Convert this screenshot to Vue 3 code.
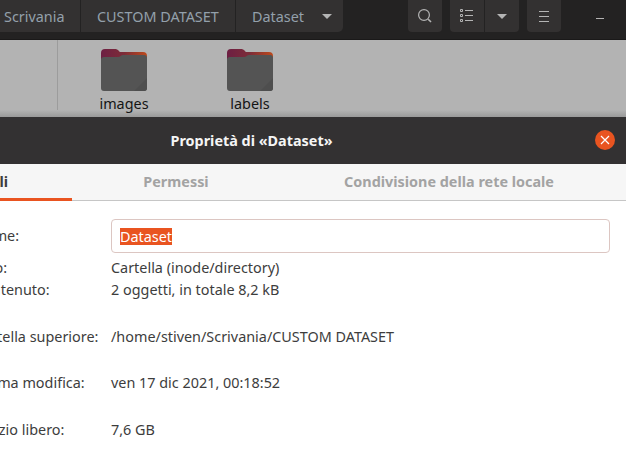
<script setup>
const pathParts = [
  { label: "Scrivania", cls: "crumb-first" },
  { label: "CUSTOM DATASET", cls: "crumb-mid" },
]
const folders = ["images", "labels"]
const rows = [
  { label: "Tipo:", value: "Cartella (inode/directory)", cls: "row-first" },
  { label: "Contenuto:", value: "2 oggetti, in totale 8,2 kB", cls: "" },
  { label: "Cartella superiore:", value: "/home/stiven/Scrivania/CUSTOM DATASET", cls: "row-spaced" },
  { label: "Ultima modifica:", value: "ven 17 dic 2021, 00:18:52", cls: "row-spaced" },
  { label: "Spazio libero:", value: "7,6 GB", cls: "row-spaced" },
]
</script>

<template>
  <div class="screen">
    <header class="toolbar">
      <nav class="pathbar">
        <span v-for="part in pathParts" :key="part.label" class="crumb" :class="part.cls">{{ part.label }}</span>
        <span class="crumb crumb-last">Dataset<i class="caret"></i></span>
      </nav>
      <div class="tools">
        <button class="tool">
          <svg width="16" height="16" viewBox="0 0 16 16" fill="none" stroke="#b4b4b4" stroke-width="1.2">
            <circle cx="7" cy="7" r="5.4" />
            <path d="M11.2 11.2 14 14" stroke-width="1.6" />
          </svg>
        </button>
        <div class="tool-group">
          <button class="tool">
            <svg width="14" height="14" viewBox="0 0 14 14" fill="none" stroke="#b4b4b4">
              <path d="M.5.5h2v2h-2zM.5 5.5h2v2h-2zM.5 10.5h2v2h-2zM5 1.5h8M5 6.5h8M5 11.5h8" />
            </svg>
          </button>
          <button class="tool"><i class="caret"></i></button>
        </div>
        <button class="tool">
          <svg width="12" height="12" viewBox="0 0 12 12" fill="none" stroke="#b4b4b4">
            <path d="M1 1.500h10M1 6.500h10M1 11.500h10" />
          </svg>
        </button>
        <span class="minimize"></span>
      </div>
    </header>

    <section class="files">
      <aside class="sidebar"></aside>
      <div class="folder" v-for="name in folders" :key="name">
        <svg width="48" height="44" viewBox="0 0 48 44">
          <defs>
            <linearGradient :id="'back-' + name" x1="0" y1="0" x2="1" y2="0">
              <stop offset="0" stop-color="#6d1f43" />
              <stop offset="0.5" stop-color="#7d2c38" />
              <stop offset="1" stop-color="#bd4a1c" />
            </linearGradient>
          </defs>
          <path d="M1 5a4 4 0 0 1 4-4h10c3 0 4 2.500 5 3h23a4 4 0 0 1 4 4v12H1z" :fill="'url(#back-' + name + ')'" />
          <path d="M1 12a3 3 0 0 1 3-3h14c2.500 0 3-2 5-2h21a3 3 0 0 1 3 3v30a3 3 0 0 1-3 3H4a3 3 0 0 1-3-3z" fill="#545454" />
          <path d="M47 30v10a3 3 0 0 1-3 3H34z" fill="#4e4e4e" />
        </svg>
        <span class="folder-name">{{ name }}</span>
      </div>
    </section>

    <section class="dialog">
      <div class="titlebar">
        <h1 class="title">Proprietà di «Dataset»</h1>
        <button class="close">
          <svg width="10" height="10" viewBox="0 0 10 10" stroke="#fff" stroke-width="1.2">
            <path d="M1 1l8 8M9 1l-8 8" />
          </svg>
        </button>
      </div>
      <div class="tabs">
        <span class="tab tab-active">Dettagli</span>
        <span class="tab tab-perm">Permessi</span>
        <span class="tab tab-share">Condivisione della rete locale</span>
      </div>
      <div class="details">
        <span class="label name-label">Nome:</span>
        <div class="entry"><span class="selected">Dataset</span></div>
        <template v-for="row in rows" :key="row.label">
          <span class="label" :class="row.cls">{{ row.label }}</span>
          <span class="value" :class="row.cls">{{ row.value }}</span>
        </template>
      </div>
    </section>
  </div>
</template>

<style>
html, body {
  margin: 0;
  background: #fff;
}
</style>

<style scoped>
.screen {
  width: 626px;
  height: 464px;
  overflow: hidden;
  display: flex;
  flex-direction: column;
  font-family: "Noto Sans", "Open Sans", sans-serif;
  font-size: 14.4px;
  color: #3d3d3d;
}

/* Top bar of the file manager, dimmed by the dialog */
.toolbar {
  height: 39px;
  flex: none;
  display: flex;
  background: #232222;
  border-bottom: 1px solid #1a1919;
}

.pathbar {
  height: 32px;
  display: flex;
  background: #333131;
  border-radius: 0 0 5px 0;
  color: #93a0ab;
}

.crumb {
  display: flex;
  align-items: center;
  border-right: 1px solid #232222;
  height: 32px;
  box-sizing: border-box;
}

.crumb-first {
  width: 81px;
  padding-left: 4px;
}

.crumb-mid {
  width: 155px;
  padding-left: 16px;
}

.crumb-last {
  width: 107px;
  padding-left: 16px;
  border-right: 0;
}

.caret {
  display: block;
  width: 0;
  height: 0;
  border: 5px solid transparent;
  border-top: 5px solid #b4b4b4;
  border-bottom: 0;
}

.crumb-last .caret {
  margin-left: 18px;
}

.tools {
  display: flex;
  gap: 8px;
  margin-left: 65px;
}

.tool {
  width: 34px;
  height: 32px;
  padding: 0;
  border: 0;
  border-radius: 0 0 4px 4px;
  background: #333131;
  display: flex;
  align-items: center;
  justify-content: center;
}

.tool-group {
  display: flex;
  gap: 1px;
}

.tool-group .tool:first-child {
  border-radius: 0 0 0 4px;
}

.tool-group .tool:last-child {
  border-radius: 0 0 4px 0;
}

.minimize {
  width: 8px;
  height: 1px;
  margin: 18px 0 0 27px;
  background: #b4b4b4;
}

/* Dimmed folder view */
.files {
  height: 77px;
  flex: none;
  display: flex;
  background: linear-gradient(#b3b3b3 70px, #9a9a9a);
}

.sidebar {
  width: 57px;
  height: 70px;
  border-right: 1px solid #9c9c9c;
  flex: none;
  margin-right: 42px;
}

.folder {
  width: 48px;
  margin-right: 78px;
  padding-top: 8px;
  display: flex;
  flex-direction: column;
  align-items: center;
}

.folder svg {
  flex: none;
}

.folder-name {
  margin-top: 2px;
  font-size: 14.4px;
  line-height: 20px;
  color: #151515;
}

/* Properties dialog */
.dialog {
  flex: 1;
  display: flex;
  flex-direction: column;
  background: #fff;
}

.titlebar {
  height: 47px;
  flex: none;
  display: flex;
  align-items: center;
  justify-content: center;
  position: relative;
  box-sizing: border-box;
  padding-right: 123px;
  background: #333132;
}

.title {
  margin: 0;
  font-size: 14.4px;
  font-weight: 700;
  color: #f5f5f5;
}

.close {
  position: absolute;
  right: 11px;
  top: 13px;
  width: 20px;
  height: 20px;
  padding: 0;
  border: 0;
  border-radius: 50%;
  background: #e95420;
  display: flex;
  align-items: center;
  justify-content: center;
}

.tabs {
  height: 37px;
  flex: none;
  box-sizing: border-box;
  display: flex;
  background: #f6f6f6;
  border-bottom: 1px solid #c6c6c6;
  font-weight: 700;
  font-size: 14.4px;
  color: #a3a3a3;
}

.tab {
  display: flex;
  align-items: center;
  justify-content: center;
  height: 36px;
  padding-bottom: 2px;
  box-sizing: border-box;
}

.tab-active {
  width: 72px;
  justify-content: flex-end;
  padding-right: 64px;
  padding-bottom: 0;
  color: #3d3d3d;
  border-bottom: 3px solid #e95420;
  height: 37px;
  white-space: nowrap;
}

.tab-perm {
  width: 208px;
}

.tab-share {
  width: 338px;
}

.details {
  display: grid;
  grid-template-columns: 137px 499px;
  margin: 18px 0 0 -26px;
  align-items: center;
  line-height: 22px;
}

.entry {
  height: 34px;
  box-sizing: border-box;
  border: 1px solid #dcc6c2;
  border-radius: 4px;
  padding-left: 8px;
  display: flex;
  align-items: center;
}

.selected {
  background: #e95420;
  color: #fff;
  line-height: 17px;
}

.row-first {
  margin-top: 4px;
}

.row-spaced {
  margin-top: 24.67px;
}
</style>
